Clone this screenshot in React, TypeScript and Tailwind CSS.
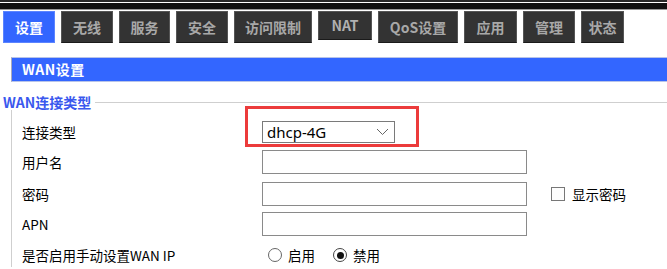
import React from "react";

const tabs = ["设置", "无线", "服务", "安全", "访问限制", "NAT", "QoS设置", "应用", "管理", "状态"];
const widths = [52, 52, 51, 52, 78, 54, 80, 53, 52, 43];

const font = { fontFamily: '"Noto Sans CJK SC", "Noto Sans", sans-serif' };

export default function App() {
  return (
    <div className="w-[667px] h-[269px] overflow-hidden bg-white text-black" style={font}>
      {/* top stripes */}
      <div className="h-[2px] bg-[#2a2a2a]" />
      <div className="h-[1px] bg-white" />
      <div className="h-[6px] bg-[#111]" />
      <div className="h-[1px] bg-[#999]" />

      {/* tabs */}
      <div className="flex gap-[6px] pl-[3px] mt-[1px] items-start">
        {tabs.map((t, i) => (
          <div
            key={t}
            style={{ width: widths[i] }}
            className={
              i === 0
                ? "h-[32px] flex items-center justify-center bg-[#3366ff] border border-[#5b84ff] text-white font-bold text-[14px]"
                : i === 5
                ? "h-[29px] flex items-center justify-center bg-[#333] border border-[#555] border-b-[#1a1a1a] text-[#b0b0b0] font-bold text-[14px]"
                : "h-[32px] flex items-center justify-center bg-[#333] border border-[#555] border-b-[#1a1a1a] text-[#a8a8a8] font-bold text-[14px]"
            }
          >
            {t}
          </div>
        ))}
      </div>

      {/* WAN设置 bar */}
      <div className="ml-[11px] mt-[14px] h-[25px] bg-[#3366ff] border-y border-[#b8c4e8] border-l border-l-[#aab] flex items-center pl-[10px] text-white font-bold text-[14px] tracking-[0.5px]">
        WAN设置
      </div>

      {/* fieldset legend */}
      <div className="flex items-center pl-[3px] mt-[12px] h-[16px]">
        <span className="text-[#3a58ee] font-bold text-[14px] leading-none">WAN连接类型</span>
        <div className="flex-1 h-px bg-[#cfcfcf] ml-[4px]" />
      </div>

      {/* fieldset body */}
      <div className="ml-[11px] border-l border-[#cfcfcf] pl-[10px] pt-[11px] text-[13.5px]">
        <div className="flex items-center h-[22px]">
          <div className="w-[240px]">连接类型</div>
          <div className="relative">
            <div className="absolute left-[-17px] top-[-15px] w-[174px] h-[41px] border-[3px] border-[#ec3b3b]" />
            <div className="w-[133px] h-[22px] border border-[#7a7a7a] flex items-center justify-between pl-[4px] pr-[5px] text-[15px]" style={{ fontFamily: '"Noto Sans", "Open Sans", sans-serif' }}>
              <span>dhcp-4G</span>
              <svg width="13" height="8" viewBox="0 0 13 8">
                <path d="M1 1 L6.5 6.5 L12 1" fill="none" stroke="#666" strokeWidth="1" />
              </svg>
            </div>
          </div>
        </div>

        <div className="flex items-center h-[24px] mt-[7px]">
          <div className="w-[240px]">用户名</div>
          <div className="w-[265px] h-[24px] border border-[#8a8a8a]" />
        </div>

        <div className="flex items-center h-[24px] mt-[8px]">
          <div className="w-[240px]">密码</div>
          <div className="w-[265px] h-[24px] border border-[#8a8a8a]" />
          <div className="ml-[24px] w-[14px] h-[14px] border border-[#777] bg-[#fdfdfd]" />
          <span className="ml-[7px]">显示密码</span>
        </div>

        <div className="flex items-center h-[24px] mt-[6px]">
          <div className="w-[240px]">APN</div>
          <div className="w-[265px] h-[24px] border border-[#8a8a8a]" />
        </div>

        <div className="flex items-center h-[24px] mt-[7px]">
          <div className="w-[246px]">是否启用手动设置WAN IP</div>
          <div className="w-[14px] h-[14px] rounded-full border border-[#666]" />
          <span className="ml-[6px]">启用</span>
          <div className="ml-[18px] w-[14px] h-[14px] rounded-full border border-[#444] flex items-center justify-center">
            <div className="w-[7px] h-[7px] rounded-full bg-[#111]" />
          </div>
          <span className="ml-[6px]">禁用</span>
        </div>
      </div>
    </div>
  );
}
